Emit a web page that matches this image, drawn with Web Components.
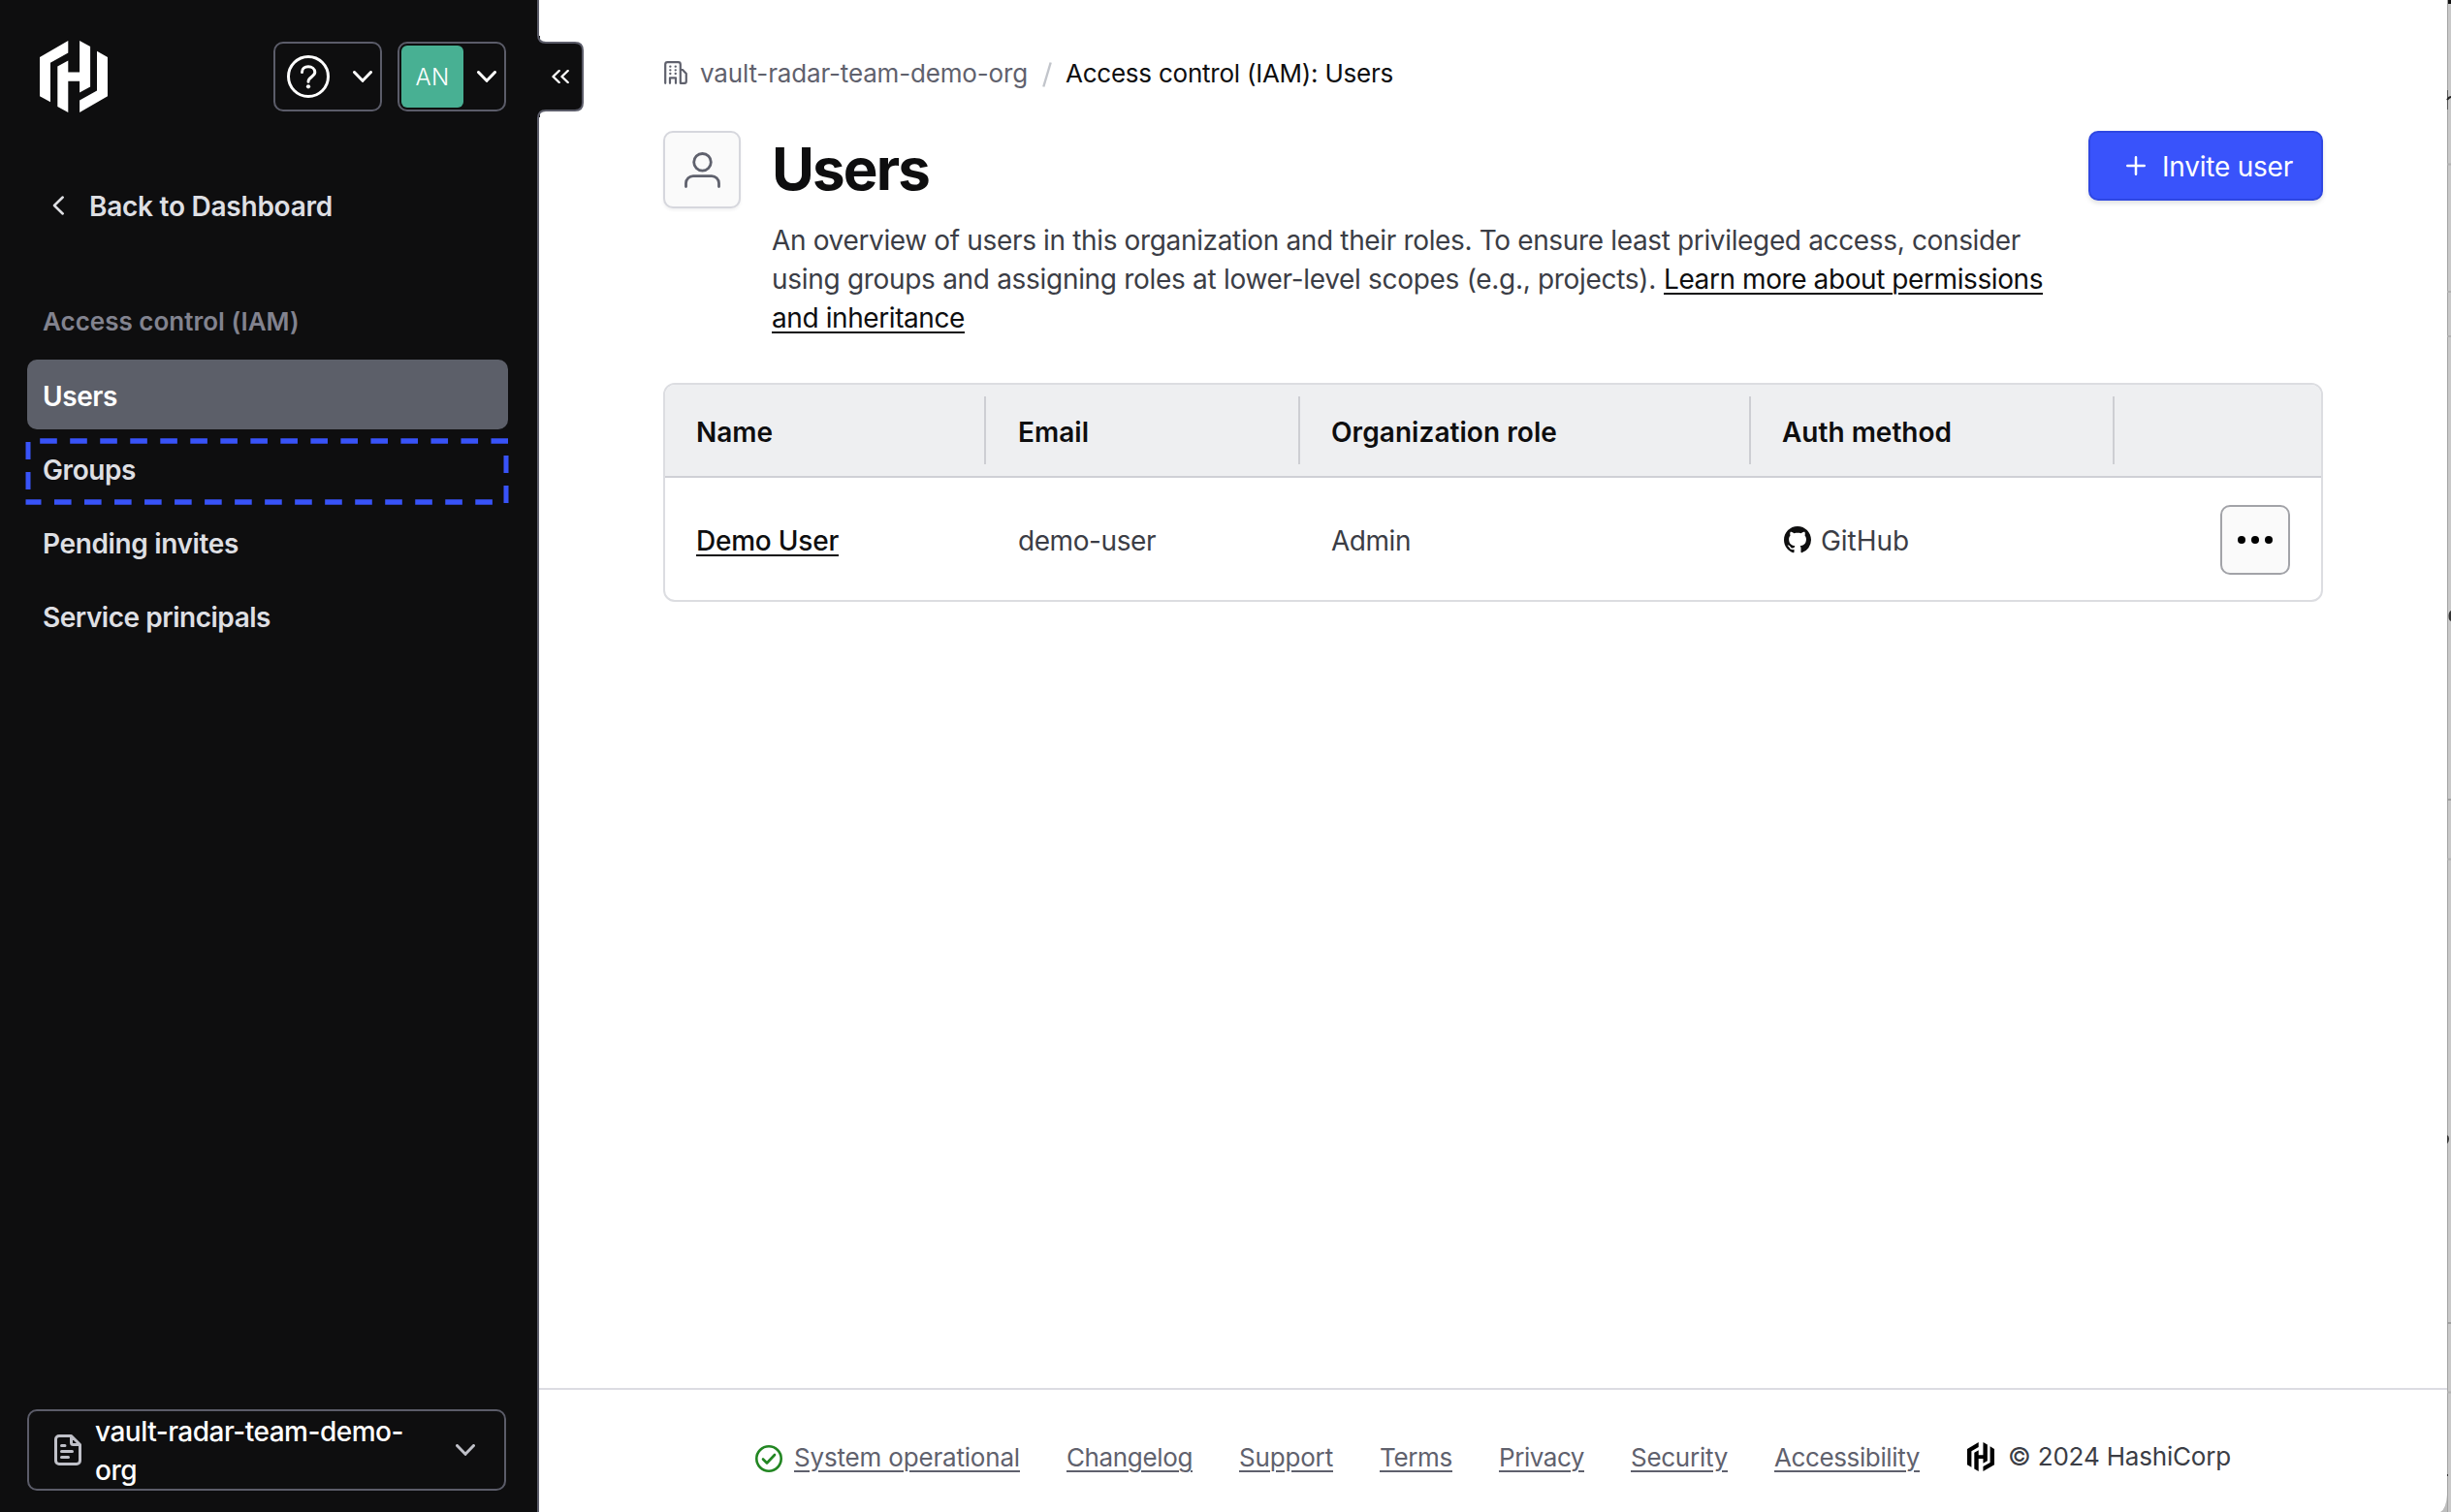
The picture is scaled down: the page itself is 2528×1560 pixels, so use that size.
<!DOCTYPE html>
<html lang="en">
<head>
<meta charset="utf-8">
<title>Users</title>
<style>
html,body{margin:0;height:100%;overflow:hidden;background:#fff}
body{font-family:Inter,"Liberation Sans",sans-serif;font-size:28px;color:#3b3d45}
</style>
</head>
<body>
<iam-app></iam-app>
<script>
const define = (name, html, setup) => {
  const t = document.createElement('template');
  t.innerHTML = html;
  customElements.define(name, class extends HTMLElement {
    connectedCallback() {
      if (this.shadowRoot) return;
      this.attachShadow({mode: 'open'}).append(t.content.cloneNode(true));
      if (setup) setup(this, this.shadowRoot);
    }
  });
};

/* A single-line label whose tracking is adjusted to a given measure. */
define('fit-text', `<style>
:host{display:inline-block;white-space:nowrap}
:host([link]){text-decoration:underline;text-decoration-thickness:2px;text-underline-offset:4px}
</style><slot></slot>`, host => {
  const w = +host.getAttribute('w');
  const n = host.textContent.length;
  const natural = host.getBoundingClientRect().width;
  host.style.letterSpacing = ((w - natural) / n).toFixed(3) + 'px';
});

const ICONS = {
  logo: ['100 126 172 221', '<g fill="currentColor"><path d="M100 177 172 126V163L127 194V315L100 297Z"/><path d="M145 205 172 187V223H201V126L228 144V268L201 286V251H172V347L145 329Z"/><path d="M245 158 272 177V297L201 347V310L245 280Z"/></g>'],
  help: ['0 0 44 44', '<circle cx="22" cy="22" r="20.5" stroke-width="3"/><path d="M15.5 17.5C15.5 13.8 18.4 11.8 22 11.8S28.8 14 28.8 17.6C28.8 22 22 22.4 22 27.2" stroke-width="3"/><circle cx="22" cy="32.3" r="2.1" fill="currentColor" stroke="none"/>'],
  down: ['0 0 20 12', '<path d="M1.5 1.5 10 10.3 18.5 1.5" stroke-width="3"/>'],
  left: ['0 0 12 20', '<path d="M10.7 1.5 2 10 10.7 18.5" stroke-width="2.5"/>'],
  double: ['0 0 18 14', '<path d="M7.7 1 1.5 7 7.7 13M16.7 1 10.5 7 16.7 13" stroke-width="2.4"/>'],
  file: ['0 0 28 32', '<path d="M17.5 1.5H5A3.5 3.5 0 0 0 1.5 5V27A3.5 3.5 0 0 0 5 30.500H23A3.5 3.5 0 0 0 26.500 27V10.500ZM17.500 1.500V8.500A2 2 0 0 0 19.500 10.500H26.500M7.500 11.500H11M7.500 17.500H18.500M7.500 23.500H14.500" stroke-width="3"/>'],
  org: ['0 0 24 24', '<path d="M1.200 22.800V3.500A2.300 2.300 0 0 1 3.500 1.200H14.500A2.300 2.300 0 0 1 16.800 3.500V22.800M16.800 9H19L22.800 13V21A1.800 1.800 0 0 1 21 22.800H16.800M6 22.800V17.300H12V22.800" stroke-width="2.200"/><path d="M6.300 5.700h.1M11.700 5.700h.1M6.300 9.300h.1M11.700 9.300h.1M6.300 13h.1M11.700 13h.1" stroke-width="2.300"/>'],
  user: ['0 0 37 37', '<circle cx="18.500" cy="10.300" r="8.800" stroke-width="2.800"/><path d="M1.500 35.500V32A7.500 7.500 0 0 1 9 24.700H28A7.500 7.500 0 0 1 35.500 32V35.500" stroke-width="2.800"/>'],
  plus: ['0 0 20 20', '<path d="M10 1.300V18.700M1.300 10H18.700" stroke-width="2.500"/>'],
  github: ['0 0 16 16', '<path fill="currentColor" stroke="none" fill-rule="evenodd" d="M8 0C3.580 0 0 3.580 0 8c0 3.540 2.290 6.530 5.470 7.590.4.070.55-.17.55-.38 0-.19-.01-.82-.01-1.490-2.010.37-2.530-.49-2.690-.94-.09-.23-.48-.94-.82-1.130-.28-.15-.68-.52-.01-.53.63-.01 1.080.58 1.230.82.72 1.210 1.870.87 2.330.66.070-.52.28-.87.51-1.070-1.780-.2-3.640-.89-3.640-3.950 0-.87.31-1.590.82-2.150-.08-.2-.36-1.020.08-2.120 0 0 .67-.21 2.200.82.64-.18 1.320-.27 2-.27s1.360.09 2 .27c1.530-1.040 2.200-.82 2.200-.82.44 1.100.16 1.920.08 2.120.51.56.82 1.270.82 2.150 0 3.070-1.870 3.750-3.650 3.950.29.25.54.73.54 1.480 0 1.070-.01 1.930-.01 2.200 0 .21.15.46.55.38A8.010 8.010 0 0 0 16 8c0-4.420-3.580-8-8-8Z"/>'],
  dots: ['0 0 38 8', '<g fill="currentColor" stroke="none"><circle cx="5" cy="4" r="4"/><circle cx="19" cy="4" r="4"/><circle cx="33" cy="4" r="4"/></g>'],
  check: ['0 0 28 28', '<circle cx="14" cy="14" r="12.700" stroke-width="2.600"/><path d="M8 14.500 12 18.500 20 10" stroke-width="2.600"/>']
};
define('ui-icon', `<style>:host{display:inline-block;flex:none;line-height:0}svg{display:block;width:100%;height:100%;fill:none;stroke:currentColor;stroke-linecap:round;stroke-linejoin:round}</style>`, (host, root) => {
  const name = host.getAttribute('name');
  const [box, body] = ICONS[name];
  host.style.width = host.getAttribute('w') + 'px';
  host.style.height = host.getAttribute('h') + 'px';
  const s = document.createElement('div');
  s.style.cssText = 'width:100%;height:100%';
  s.innerHTML = `<svg viewBox="${box}" preserveAspectRatio="none"${name === 'logo' ? ' style="stroke:none"' : ''}>${body}</svg>`;
  root.append(s);
});

define('menu-button', `<style>
:host{display:flex;align-items:center;justify-content:space-between;box-sizing:border-box;width:112px;height:72px;border:2px solid #5b5c69;border-radius:10px;color:#fff;padding:0 8px 0 12px}
:host([avatar]){padding-left:2px}
</style><slot></slot><ui-icon name="down" w="20" h="12"></ui-icon>`);

define('nav-item', `<style>
:host{display:flex;align-items:center;box-sizing:border-box;height:72px;padding:3px 16px 0;border-radius:10px;color:#dedfe3;font-weight:560;position:relative}
:host([active]){background:#5c5f69;color:#fff}
</style><slot></slot>`);

define('focus-frame', `<style>:host{position:absolute;left:-2px;top:5px;width:500px;height:70px}svg{display:block}</style>
<svg width="500" height="70" viewBox="26 452 500 70" stroke="#3853f8" fill="none">
<path d="M41.200 455H524" stroke-width="5.400" stroke-dasharray="17.600 13.420"/>
<path d="M26.500 518H42.500M56 518H508.500" stroke-width="5.400" stroke-dasharray="17.600 13.420"/>
<path d="M29 456V474M29 487V505" stroke-width="5"/>
<path d="M522 470V488M522 501V519" stroke-width="5"/>
</svg>`);

define('collapse-tab', `<style>:host{position:absolute;left:554px;top:33px;width:50px;height:92px;color:#fff}svg{display:block}ui-icon{position:absolute;left:15px;top:39px}</style>
<svg width="50" height="92" viewBox="554 33 50 92"><path d="M554 37H557V121H554Z" fill="#0e0e0f"/><path d="M555 33V36Q555 44 563 44H593Q601 44 601 52V106Q601 114 593 114H563Q555 114 555 122V125" fill="#0e0e0f" stroke="#5b5c69" stroke-width="2"/></svg>
<ui-icon name="double" w="18" h="14"></ui-icon>`);

define('side-bar', `<style>
:host{display:flex;flex-direction:column;box-sizing:border-box;width:556px;height:1560px;padding:43px 30px 22px 28px;border-right:2px solid #5b5c69;background:#0e0e0f;position:relative;flex:none}
header{display:flex;align-items:center;gap:16px;height:72px;color:#fff;padding:0 2px 0 13px}
header ui-icon[name=logo]{margin-right:auto}
.av{width:64px;height:64px;border-radius:6px;background:#48b093;display:flex;align-items:center;justify-content:center;font-size:24px;font-weight:300}
.back{display:flex;align-items:center;gap:26px;height:72px;margin-top:61px;padding-left:26px;color:#dedfe3;font-weight:560}
.label{height:60px;line-height:61px;margin:53px 0 10px;padding-left:16px;color:#82838f;font-size:26px;font-weight:600}
nav{display:flex;flex-direction:column;gap:4px;width:496px}
.org{display:flex;align-items:center;box-sizing:border-box;width:494px;height:84px;margin-top:auto;border:2px solid #5b5c69;border-radius:10px;padding:0 30px 0 26px;color:#bfc0c8}
.org div{color:#fff;font-weight:500;line-height:40px;margin:2px auto 0 14px}
</style>
<header><ui-icon name="logo" w="70" h="74"></ui-icon><menu-button><ui-icon name="help" w="44" h="44"></ui-icon></menu-button><menu-button avatar><span class="av"><fit-text w="35">AN</fit-text></span></menu-button></header>
<div class="back"><ui-icon name="left" w="12" h="20"></ui-icon><fit-text w="251" style="margin-top:1px">Back to Dashboard</fit-text></div>
<div class="label"><fit-text w="264">Access control (IAM)</fit-text></div>
<nav><nav-item active><fit-text w="77">Users</fit-text></nav-item><nav-item><focus-frame></focus-frame><fit-text w="96">Groups</fit-text></nav-item><nav-item><fit-text w="202">Pending invites</fit-text></nav-item><nav-item><fit-text w="235">Service principals</fit-text></nav-item></nav>
<div class="org"><ui-icon name="file" w="28" h="32"></ui-icon><div><fit-text w="318">vault-radar-team-demo-</fit-text><br><fit-text w="43">org</fit-text></div><ui-icon name="down" w="20" h="12"></ui-icon></div>
<collapse-tab></collapse-tab>`);

define('page-header', `<style>
:host{display:flex;align-items:flex-start;margin-top:39px}
.tile{display:flex;align-items:center;justify-content:center;box-sizing:border-box;width:80px;height:80px;border:2px solid #d6d7dd;border-radius:10px;background:#fafafa;color:#5f616d;box-shadow:0 2px 3px #656a7618}
.body{margin-left:32px;flex:1}
h1{margin:0;font-size:60px;line-height:79px;font-weight:700;color:#0e0e0f;height:93px}
p{margin:0;line-height:40px}
p a{color:#0e0e0f}
.btn{display:flex;align-items:center;box-sizing:border-box;width:242px;height:72px;border:2px solid #2f47e2;border-radius:10px;background:#3953fb;color:#fff;padding-left:37px;gap:17px;box-shadow:0 3px 4px #656a7630}
</style>
<div class="tile"><ui-icon name="user" w="37" h="37"></ui-icon></div>
<div class="body"><h1><fit-text w="162">Users</fit-text></h1>
<p><fit-text w="1288">An overview of users in this organization and their roles. To ensure least privileged access, consider</fit-text><br><fit-text w="912">using groups and assigning roles at lower-level scopes (e.g., projects).</fit-text><a><fit-text link w="391" style="margin-left:8px">Learn more about permissions</fit-text><br><fit-text link w="199">and inheritance</fit-text></a></p></div>
<div class="btn"><ui-icon name="plus" w="20" h="20"></ui-icon><fit-text w="135" style="margin-top:2px">Invite user</fit-text></div>`);

define('user-table', `<style>
:host{display:block;box-sizing:border-box;width:1712px;height:226px;margin-top:47px;border:2px solid #dcdde1;border-radius:12px;overflow:hidden}
.row{display:grid;grid-template-columns:331px 324px 465px 375px 1fr;align-items:center;height:126px}
.head{height:94px;background:#eeeff1;border-bottom:2px solid #cfd0d6;color:#0e0e0f;font-weight:600}
.row>div{padding:4px 0 0 32px;box-sizing:border-box;display:flex;align-items:center}
.head>div{height:70px;border-right:2px solid #cdced3}
.head>div:last-child{border:0}
.name{color:#0e0e0f;font-weight:500}
.row>.em{padding-left:33px}
.row>.gh{gap:10px;padding-left:34px}
.gh ui-icon{color:#0e0e0f;margin-top:-2px}
.row>.act{padding:0 32px 0 0;justify-content:flex-end}
.more{display:flex;align-items:center;justify-content:center;box-sizing:border-box;width:72px;height:72px;border:2px solid #a2a3a8;border-radius:10px;background:#fafafa;color:#000;margin-top:2px}
</style>
<div class="row head"><div><fit-text w="79">Name</fit-text></div><div class="em"><fit-text w="73">Email</fit-text></div><div><fit-text w="233">Organization role</fit-text></div><div><fit-text w="175">Auth method</fit-text></div><div></div></div>
<div class="row"><div class="name"><fit-text link w="147">Demo User</fit-text></div><div class="em"><fit-text w="142">demo-user</fit-text></div><div><fit-text w="82">Admin</fit-text></div><div class="gh"><ui-icon name="github" w="28" h="28"></ui-icon><fit-text w="91">GitHub</fit-text></div><div class="act"><span class="more"><ui-icon name="dots" w="38" h="8"></ui-icon></span></div></div>`);

define('page-footer', `<style>
:host{display:flex;align-items:center;justify-content:center;gap:48px;box-sizing:border-box;height:128px;margin:auto -128px 0;padding-top:13px;border-top:2px solid #dcdce2;font-size:26px;color:#5f616d}
span{display:flex;align-items:center;gap:12px}
.ok ui-icon{color:#228622;margin-top:3px}
.c{color:#3b3d45;gap:14px;margin:-2px 0 0 1px}.c ui-icon{color:#000}
</style>
<span class="ok"><ui-icon name="check" w="28" h="28"></ui-icon><fit-text link w="233">System operational</fit-text></span>
<fit-text link w="130">Changelog</fit-text><fit-text link w="97">Support</fit-text><fit-text link w="75">Terms</fit-text><fit-text link w="88">Privacy</fit-text><fit-text link w="100">Security</fit-text><fit-text link w="150">Accessibility</fit-text>
<span class="c"><ui-icon name="logo" w="28" h="30"></ui-icon><fit-text w="230">© 2024 HashiCorp</fit-text></span>`);

define('bread-crumb', `<style>
:host{display:flex;align-items:center;height:40px;padding-left:1px;margin-top:-1px;margin-bottom:1px;font-size:26px;color:#5f616d}
.here{color:#0e0e0f}
</style><ui-icon name="org" w="24" h="24"></ui-icon><fit-text w="338" style="margin-left:13px">vault-radar-team-demo-org</fit-text>
<svg width="10" height="26" style="margin:4px 14px 0 15px"><path d="M1.300 25.500 8.700.5" stroke="#c2c5cb" stroke-width="2.400"/></svg>
<fit-text class="here" w="338">Access control (IAM): Users</fit-text>`);

define('window-edge', `<style>:host{display:block;flex:none;width:4px;height:1560px;background:#c9c9c9}svg{display:block;overflow:visible}</style>
<svg width="4" height="1560"><path d="M.5 0V1560" stroke="#a3a3a3"/><path d="M1 0H4V4H1Z" fill="#111"/>
<path d="M0 169.500H4M0 301H4M0 347H4M0 886.500H4M0 1436.500H4" stroke="#b2b2b2" stroke-width="2"/><path d="M0 825H4M0 1365H4" stroke="#a0a0a0" stroke-width="2"/>
<path d="M.5 93V113" stroke="#555"/><path d="M0 103Q2 100 4 100" stroke="#222" stroke-width="2" fill="none"/><path d="M4 630Q1.500 631 1.500 635.500T4 641Z" fill="#333"/><path d="M0 1171Q2 1172 2 1175T0 1180Z" fill="#333"/><path d="M0 1521H1V1523H0Z" fill="#333"/><path d="M0 1542Q-1 1557-7 1560H0Z" fill="#bdbdbd"/></svg>`);

define('iam-app', `<style>
:host{display:flex;width:2528px;height:1560px}
main{display:flex;flex-direction:column;box-sizing:border-box;width:1968px;padding:56px 128px 0;background:#fff}
</style><side-bar></side-bar><main><bread-crumb></bread-crumb><page-header></page-header><user-table></user-table><page-footer></page-footer></main><window-edge></window-edge>`);
</script>
</body>
</html>
